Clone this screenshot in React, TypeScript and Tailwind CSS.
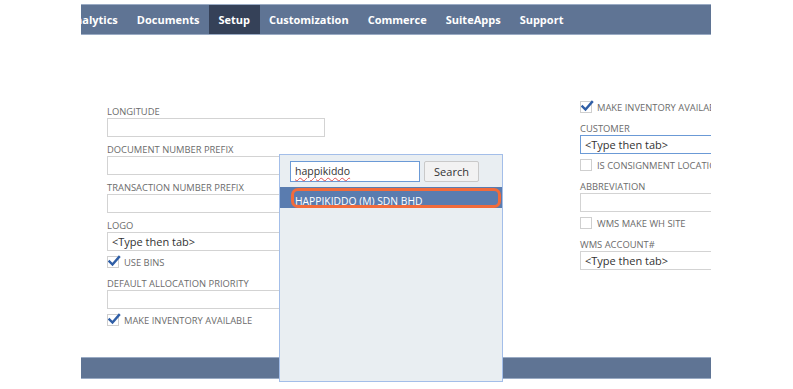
import React from 'react';

const tabs = ['Analytics', 'Documents', 'Setup', 'Customization', 'Commerce', 'SuiteApps', 'Support'];

const Label = ({ text }: { text: string }) => (
  <div className="h-[13px] text-[9.4px] leading-[13px] uppercase text-[#6b6b6b] whitespace-nowrap">{text}</div>
);

const Field = ({ label, value, focused = false, width = 'w-[218px]' }: { label: string; value?: string; focused?: boolean; width?: string }) => (
  <div className="mb-[6px]">
    <Label text={label} />
    <div
      className={`${width} h-[19px] bg-white border px-[4px] text-[11px] leading-[17px] text-[#333] whitespace-nowrap ${
        focused ? 'border-[#6b9ad6]' : 'border-[#d3d3d3]'
      }`}
    >
      {value}
    </div>
  </div>
);

const Check = ({ label, checked = false }: { label: string; checked?: boolean }) => (
  <div className="-mt-[1px] h-[21px] flex items-start gap-[5px] whitespace-nowrap">
    <div className="relative w-[12px] h-[12px] shrink-0 border border-[#cfcfcf] bg-white">
      {checked && (
        <svg className="absolute left-0 -top-[2px]" width="13" height="13" viewBox="0 0 13 13">
          <path d="M1.5 6.5 L4.5 9.5 L11 2" fill="none" stroke="#2f5ea6" strokeWidth="2.4" strokeLinecap="square" />
        </svg>
      )}
    </div>
    <div className="text-[9.4px] leading-[12px] pt-[1px] uppercase text-[#6b6b6b]">{label}</div>
  </div>
);

export default function App() {
  return (
    <div className="relative w-[793px] h-[389px] bg-white overflow-hidden font-['Open_Sans',Arial,sans-serif]">
      <div className="ml-[81px] w-[630px] overflow-hidden">
        {/* top nav */}
        <div className="mt-[4px] h-[31px] flex bg-[#5f7494] border-y border-[#9aabc4]">
          {tabs.map((t, i) => (
            <div
              key={t}
              className={`h-full flex items-center pt-[1px] px-[9.5px] text-[11px] font-bold text-white whitespace-nowrap ${
                i === 0 ? '-ml-[23px]' : ''
              } ${t === 'Setup' ? 'bg-[#354158]' : ''}`}
            >
              {t}
            </div>
          ))}
        </div>

        {/* form */}
        <div className="h-[322px] flex pl-[26px]">
          <div className="w-[473px] shrink-0 pt-[70px]">
            <Field label="Longitude" />
            <Field label="Document Number Prefix" />
            <Field label="Transaction Number Prefix" />
            <Field label="Logo" value="<Type then tab>" />
            <Check label="Use Bins" checked />
            <Field label="Default Allocation Priority" />
            <Check label="Make Inventory Available" checked />
          </div>
          <div className="w-[200px] shrink-0 pt-[67px]">
            <Check label="Make Inventory Available" checked />
            <Field label="Customer" value="<Type then tab>" focused />
            <Check label="Is Consignment Location" />
            <Field label="Abbreviation" />
            <Check label="WMS Make WH Site" />
            <Field label="WMS Account#" value="<Type then tab>" />
          </div>
        </div>

        {/* bottom bar */}
        <div className="h-[22px] bg-[#5f7494] border-y border-[#9aabc4]" />
      </div>

      {/* search popup */}
      <div className="absolute left-[279px] top-[154px] w-[224px] h-[228px] bg-[#e9eef2] border border-[#a3bee9]">
        <div className="flex items-center gap-[4px] pl-[10px] pt-[6px]">
          <div className="w-[130px] h-[21px] bg-white border border-[#6b9ad6] px-[4px] text-[10.5px] leading-[19px] text-[#333]">
            <span className="underline decoration-wavy decoration-[#e05050] decoration-[1px] underline-offset-2">happikiddo</span>
          </div>
          <div className="w-[55px] h-[21px] rounded-[2px] bg-[#f2f2f2] border border-[#c9c9c9] text-center text-[11px] leading-[19px] text-[#333]">
            Search
          </div>
        </div>
        <div className="mt-[5px] h-[21px] bg-[#5a7caf] pl-[15px] relative">
          <span className="text-[10.3px] leading-[21px] text-white underline">HAPPIKIDDO (M) SDN BHD</span>
          <div className="absolute left-[11px] right-[1px] top-[1px] bottom-0 border-[3px] border-[#f26b3b] rounded-[7px]" />
        </div>
      </div>
    </div>
  );
}
